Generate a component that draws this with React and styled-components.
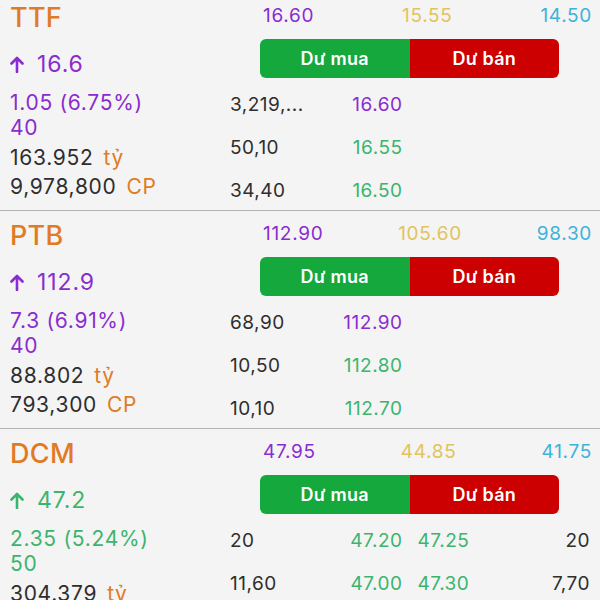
import React from 'react';
import styled, { createGlobalStyle } from 'styled-components';

const colors = {
  bg: '#f4f4f4',
  line: '#b4b4b4',
  orange: '#e07b24',
  purple: '#8a2ccf',
  green: '#3cb46e',
  yellow: '#e3c35c',
  cyan: '#40b2da',
  text: '#2e2e2e',
  buy: '#15a83d',
  sell: '#cc0000',
};

const GlobalStyle = createGlobalStyle`
  html, body {
    margin: 0;
    padding: 0;
    background: ${colors.bg};
    overflow: hidden;
  }
  body {
    font-family: Inter, "Liberation Sans", sans-serif;
    color: ${colors.text};
  }
`;

const Board = styled.div`
  width: 600px;
  height: 600px;
  overflow: hidden;
  background: ${colors.bg};
`;

const List = styled.div`
  margin-top: -7px;
`;

const Section = styled.div`
  display: grid;
  grid-template-columns: 225px 1fr;
  height: 218px;
  border-bottom: 1px solid ${colors.line};
  box-sizing: border-box;
`;

const Left = styled.div`
  display: flex;
  flex-direction: column;
  padding-left: 10px;
  white-space: nowrap;
`;

const Symbol = styled.div`
  font-size: 27px;
  font-weight: 500;
  line-height: 34px;
  padding-top: 8px;
  color: ${colors.orange};
  letter-spacing: 0.3px;
`;

const Price = styled.div`
  display: flex;
  align-items: center;
  gap: 13px;
  margin-top: 14px;
  font-size: 23px;
  line-height: 30px;
  letter-spacing: 0.9px;
  color: ${p => p.$color};
`;

const Line = styled.div`
  font-size: 21px;
  line-height: ${p => p.$lh || 27}px;
  letter-spacing: 0.7px;
  color: ${p => p.$color || colors.text};
`;

const Change = styled(Line)`
  margin-top: 10px;
`;

const Unit = styled.span`
  color: ${colors.orange};
  margin-left: 10px;
`;

const Right = styled.div`
  display: flex;
  flex-direction: column;
`;

const Limits = styled.div`
  display: flex;
  justify-content: space-between;
  padding: 12px 8px 0 38px;
  font-size: 19px;
  line-height: 22px;
  letter-spacing: 0.7px;
`;

const Limit = styled.span`
  color: ${p => p.$color};
`;

const Toggle = styled.div`
  display: flex;
  width: 299px;
  height: 39px;
  margin: 12px 0 5px 35px;
  border-radius: 6px;
  overflow: hidden;
`;

const ToggleButton = styled.div`
  flex: 1;
  display: flex;
  align-items: center;
  justify-content: center;
  background: ${p => p.$bg};
  color: #ffffff;
  font-size: 18px;
  font-weight: 600;
  letter-spacing: 0.3px;
`;

const Row = styled.div`
  display: grid;
  grid-template-columns: 1fr 1fr;
  column-gap: 15px;
  height: 43px;
  align-items: center;
  padding: 0 10px 0 5px;
  font-size: 19px;
  letter-spacing: 0.5px;
`;

const Half = styled.div`
  display: flex;
  justify-content: space-between;
`;

const Cell = styled.span`
  color: ${p => p.$color || colors.text};
`;

const Arrow = ({ color }) => (
  <svg width="14" height="17" viewBox="0 0 14 17">
    <path
      d="M7 16V2M1.5 7.5L7 2l5.5 5.5"
      fill="none"
      stroke={color}
      strokeWidth="2.6"
      strokeLinecap="round"
      strokeLinejoin="round"
    />
  </svg>
);

const stocks = [
  {
    symbol: 'TTF',
    limits: ['16.60', '15.55', '14.50'],
    price: '16.6',
    color: colors.purple,
    change: '1.05 (6.75%)',
    vol: '40',
    value: '163.952',
    shares: '9,978,800',
    rows: [
      ['3,219,...', '16.60', colors.purple],
      ['50,10', '16.55', colors.green],
      ['34,40', '16.50', colors.green],
    ],
  },
  {
    symbol: 'PTB',
    limits: ['112.90', '105.60', '98.30'],
    price: '112.9',
    color: colors.purple,
    change: '7.3 (6.91%)',
    vol: '40',
    value: '88.802',
    shares: '793,300',
    rows: [
      ['68,90', '112.90', colors.purple],
      ['10,50', '112.80', colors.green],
      ['10,10', '112.70', colors.green],
    ],
  },
  {
    symbol: 'DCM',
    limits: ['47.95', '44.85', '41.75'],
    price: '47.2',
    color: colors.green,
    change: '2.35 (5.24%)',
    vol: '50',
    value: '304.379',
    shares: '6,467,600',
    rows: [
      ['20', '47.20', colors.green, '47.25', colors.green, '20'],
      ['11,60', '47.00', colors.green, '47.30', colors.green, '7,70'],
      ['10,00', '46.95', colors.green, '47.35', colors.green, '5,00'],
    ],
  },
];

const Stock = ({ s }) => (
  <Section>
    <Left>
      <Symbol>{s.symbol}</Symbol>
      <Price $color={s.color}>
        <Arrow color={s.color} />
        {s.price}
      </Price>
      <Change $color={s.color}>{s.change}</Change>
      <Line $color={s.color} $lh={24}>{s.vol}</Line>
      <Line $lh={36}>
        {s.value}<Unit>tỷ</Unit>
      </Line>
      <Line $lh={22}>
        {s.shares}<Unit>CP</Unit>
      </Line>
    </Left>
    <Right>
      <Limits>
        <Limit $color={colors.purple}>{s.limits[0]}</Limit>
        <Limit $color={colors.yellow}>{s.limits[1]}</Limit>
        <Limit $color={colors.cyan}>{s.limits[2]}</Limit>
      </Limits>
      <Toggle>
        <ToggleButton $bg={colors.buy}>Dư mua</ToggleButton>
        <ToggleButton $bg={colors.sell}>Dư bán</ToggleButton>
      </Toggle>
      {s.rows.map((r, i) => (
        <Row key={i}>
          <Half>
            <Cell>{r[0]}</Cell>
            <Cell $color={r[2]}>{r[1]}</Cell>
          </Half>
          <Half>
            <Cell $color={r[4]}>{r[3] || ''}</Cell>
            <Cell>{r[5] || ''}</Cell>
          </Half>
        </Row>
      ))}
    </Right>
  </Section>
);

export default function App() {
  return (
    <Board>
      <GlobalStyle />
      <List>
        {stocks.map(s => (
          <Stock key={s.symbol} s={s} />
        ))}
      </List>
    </Board>
  );
}
